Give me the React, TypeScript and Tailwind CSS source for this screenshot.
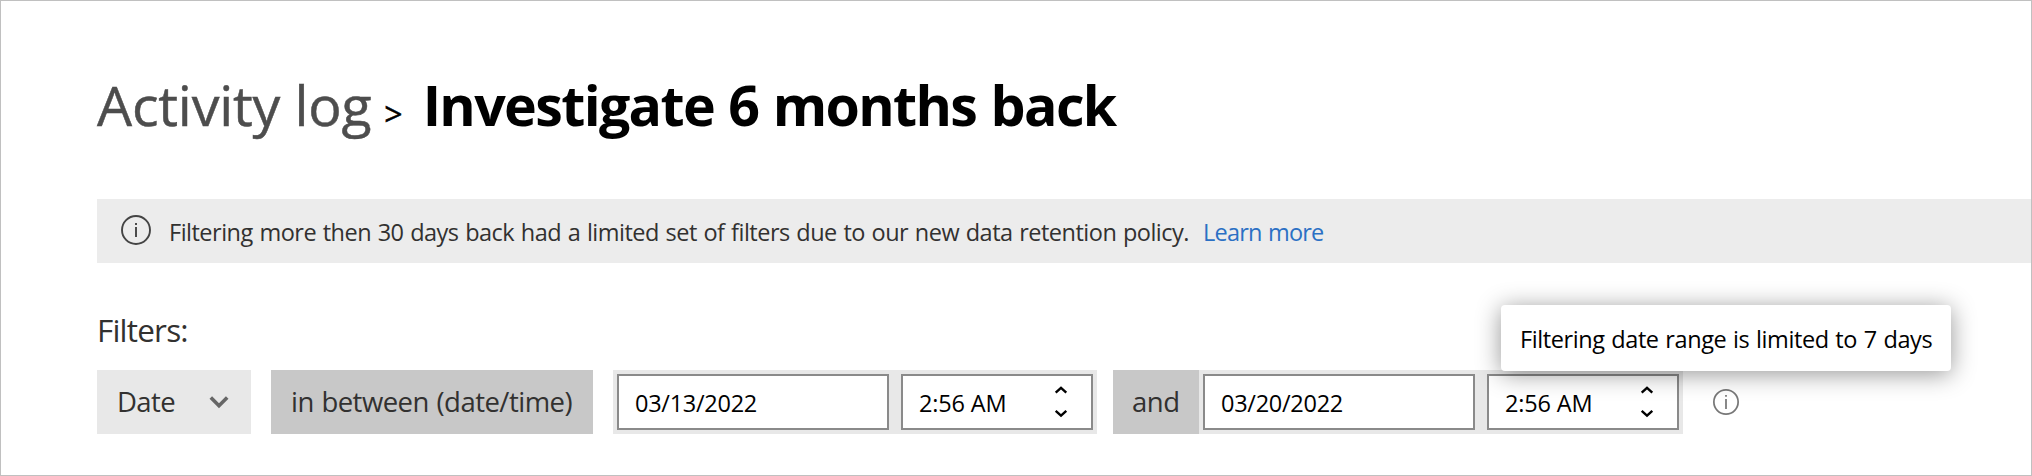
function InfoIcon({ className, stroke, glyph }: { className: string; stroke: number; glyph: string }) {
  return (
    <svg viewBox="0 0 30 30" fill="none" stroke="currentColor" className={className}>
      <circle cx="15" cy="15" r="14" strokeWidth={stroke} />
      <path d={glyph} strokeWidth={stroke} />
    </svg>
  );
}

function Spinner() {
  return (
    <svg viewBox="0 0 14 32" fill="none" stroke="currentColor" strokeWidth="2.4" className="h-8 w-3.5 shrink-0">
      <path d="M1.7 6.6L7 1.8l5.3 4.8M1.7 24.9L7 29.7l5.3-4.8" />
    </svg>
  );
}

function DateField({ value }: { value: string }) {
  return (
    <div className="flex h-14 w-[272px] items-center border-2 border-[#8a8a8a] bg-white pl-4 text-black">
      <span className="pt-px text-[23.5px] leading-8 tracking-[-0.27px]">{value}</span>
    </div>
  );
}

function TimeField({ value }: { value: string }) {
  return (
    <div className="flex h-14 w-48 items-center justify-between border-2 border-[#8a8a8a] bg-white pl-4 pr-[23px] text-black">
      <span className="pt-px text-[23.5px] leading-8 tracking-[-0.15px]">{value}</span>
      <Spinner />
    </div>
  );
}

export default function App() {
  return (
    <div className="relative h-[476px] w-[2032px] overflow-hidden border border-[#c0c0c0] bg-white pl-24 pt-[74px] font-['Open_Sans','Noto_Sans',sans-serif] whitespace-nowrap text-[#323130]">
      <h1 className="flex h-[60px] items-baseline text-[55.5px] leading-[60px]">
        <span className="tracking-[-0.2px] text-[#4d4d4d] [-webkit-text-stroke:0.5px_#4d4d4d]">Activity log</span>
        <span className="ml-[13px] text-[32px] text-black [-webkit-text-stroke:0.5px_#000]">&gt;</span>
        <span className="ml-5 font-bold tracking-[-1.65px] text-black [word-spacing:1.5px]">
          Investigate 6 months back
        </span>
      </h1>

      <div className="mt-16 flex h-16 items-center bg-[#ececec] pl-6 text-[23.5px] leading-8">
        <InfoIcon stroke={1.9} glyph="M15 12v10M15 8v2" className="mb-0.5 size-[30px] text-[#444]" />
        <span className="ml-[18px] pt-0.5 tracking-[-0.5px] [word-spacing:1px]">
          Filtering more then 30 days back had a limited set of filters due to our new data retention policy.
        </span>
        <a className="ml-[14px] pt-0.5 tracking-[-0.78px] text-[#2b70c4] [word-spacing:1px]">Learn more</a>
      </div>

      <div className="mt-[47px] h-10 text-[31.5px] leading-10 tracking-[-0.8px]">Filters:</div>

      <div className="mt-5 flex h-16 items-center text-[27.5px] leading-10">
        <div className="flex h-16 w-[154px] items-center justify-between bg-[#e8e8e8] pl-5 pr-[22px]">
          <span className="tracking-[-0.62px]">Date</span>
          <svg viewBox="0 0 20 14" fill="none" stroke="#666" strokeWidth="3.6" className="h-3.5 w-5">
            <path d="M1.8 2.6L10 10.8l8.2-8.2" />
          </svg>
        </div>
        <div className="ml-5 flex h-16 w-[322px] items-center bg-[#c8c8c8] pl-5 tracking-[-0.52px] [word-spacing:1px]">
          in between (date/time)
        </div>
        <div className="ml-5 flex h-16 w-[484px] items-center gap-3 bg-[#e8e8e8] px-1">
          <DateField value="03/13/2022" />
          <TimeField value="2:56 AM" />
        </div>
        <div className="ml-4 flex h-16 w-[86px] items-center bg-[#c8c8c8] pl-[19px] tracking-[-0.5px]">and</div>
        <div className="flex h-16 w-[484px] items-center gap-3 bg-[#e8e8e8] px-1">
          <DateField value="03/20/2022" />
          <TimeField value="2:56 AM" />
        </div>
        <InfoIcon stroke={2} glyph="M15 11.5V23M15 7v2" className="ml-[30px] size-[26px] text-[#777]" />
      </div>

      <div
        role="tooltip"
        className="absolute left-[1500px] top-[304px] flex h-[66px] w-[450px] items-center rounded bg-white pl-[19px] pt-0.5 text-[23.5px] leading-8 tracking-[-0.41px] text-black shadow-[0_3px_24px_rgba(0,0,0,0.42)] [word-spacing:1px]"
      >
        Filtering date range is limited to 7 days
      </div>
    </div>
  );
}
